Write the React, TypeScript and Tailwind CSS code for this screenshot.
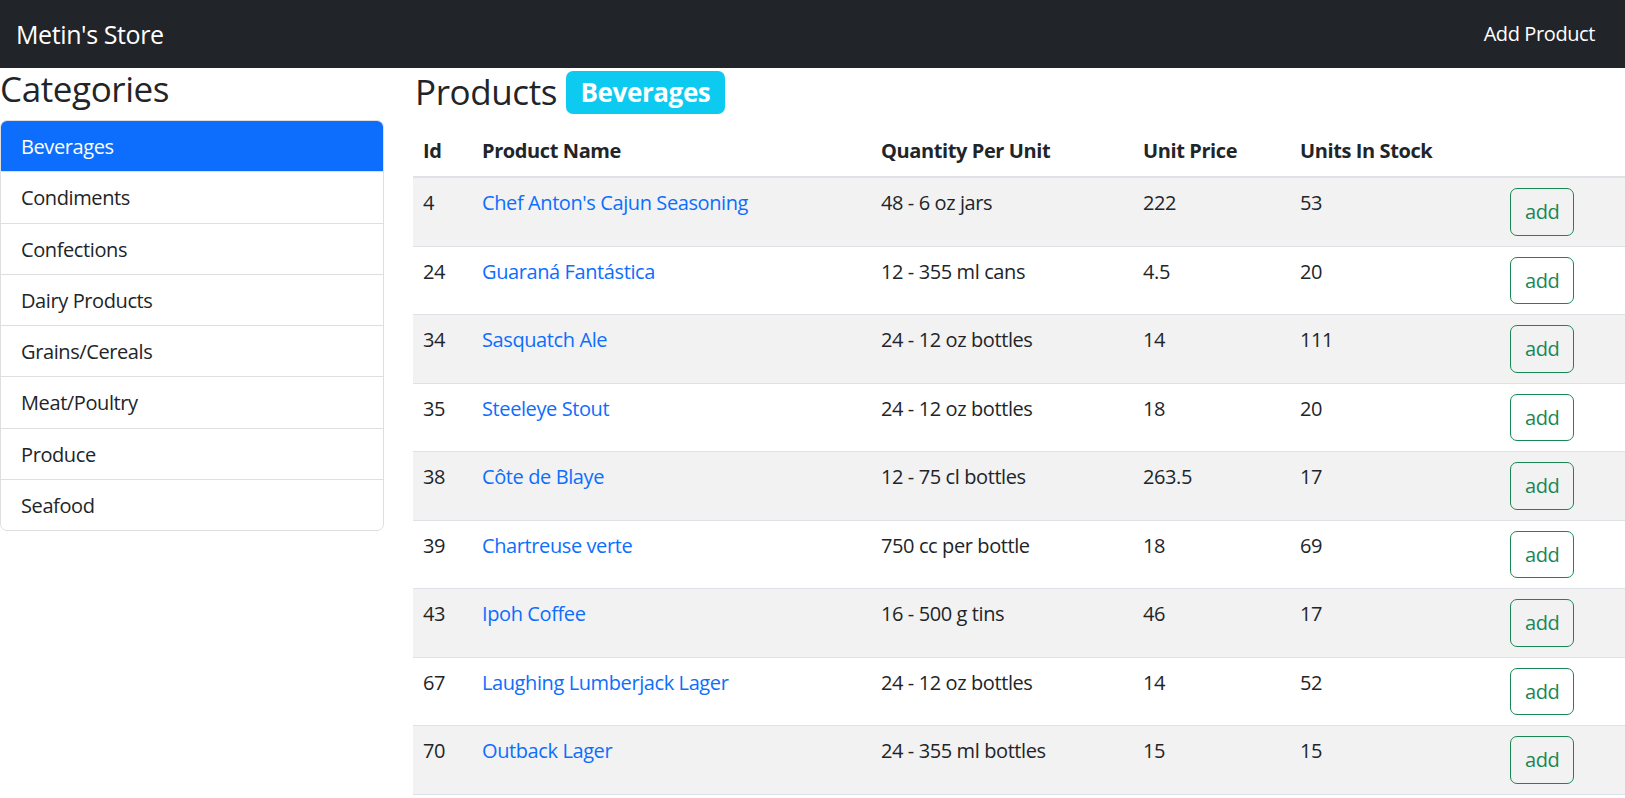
import React from "react";

type Product = {
  id: number;
  name: string;
  quantityPerUnit: string;
  unitPrice: number;
  unitsInStock: number;
};

const categories = [
  "Beverages",
  "Condiments",
  "Confections",
  "Dairy Products",
  "Grains/Cereals",
  "Meat/Poultry",
  "Produce",
  "Seafood",
];

const products: Product[] = [
  { id: 4, name: "Chef Anton's Cajun Seasoning", quantityPerUnit: "48 - 6 oz jars", unitPrice: 222, unitsInStock: 53 },
  { id: 24, name: "Guaraná Fantástica", quantityPerUnit: "12 - 355 ml cans", unitPrice: 4.5, unitsInStock: 20 },
  { id: 34, name: "Sasquatch Ale", quantityPerUnit: "24 - 12 oz bottles", unitPrice: 14, unitsInStock: 111 },
  { id: 35, name: "Steeleye Stout", quantityPerUnit: "24 - 12 oz bottles", unitPrice: 18, unitsInStock: 20 },
  { id: 38, name: "Côte de Blaye", quantityPerUnit: "12 - 75 cl bottles", unitPrice: 263.5, unitsInStock: 17 },
  { id: 39, name: "Chartreuse verte", quantityPerUnit: "750 cc per bottle", unitPrice: 18, unitsInStock: 69 },
  { id: 43, name: "Ipoh Coffee", quantityPerUnit: "16 - 500 g tins", unitPrice: 46, unitsInStock: 17 },
  { id: 67, name: "Laughing Lumberjack Lager", quantityPerUnit: "24 - 12 oz bottles", unitPrice: 14, unitsInStock: 52 },
  { id: 70, name: "Outback Lager", quantityPerUnit: "24 - 355 ml bottles", unitPrice: 15, unitsInStock: 15 },
];

const Navi: React.FC = () => (
  <nav className="h-[68px] bg-[#212529] text-white flex items-center justify-between pl-4 pr-[30px]">
    <span className="text-[25px] leading-[36px]">Metin's Store</span>
    <a className="text-[20px] leading-[30px] cursor-pointer">Add Product</a>
  </nav>
);

const CategoryList: React.FC<{ current: string }> = ({ current }) => (
  <div className="w-[384px] shrink-0">
    <h3 className="text-[35px] leading-[42px] font-medium mb-[10px]">Categories</h3>
    <ul className="border border-[#dfdfdf] rounded-[7px] overflow-hidden">
      {categories.map((c, i) => (
        <li
          key={c}
          className={`px-5 pt-[11px] pb-[9px] text-[20px] leading-[30.25px] cursor-pointer ${
            i > 0 ? "border-t border-[#dfdfdf]" : ""
          } ${c === current ? "bg-[#0d6efd] text-white" : ""}`}
        >
          {c}
        </li>
      ))}
    </ul>
  </div>
);

const ProductList: React.FC<{ current: string }> = ({ current }) => (
  <div className="flex-1 ml-[29px]">
    {/* başlık */}
    <h3 className="h-[48px] flex items-center text-[35px] font-medium mb-[10px] pl-[2px]">
      Products
      <span className="ml-[9px] bg-[#0dcaf0] text-white font-bold text-[26px] leading-none px-[14.5px] pt-[8px] pb-[9px] rounded-[7px]">
        {current}
      </span>
    </h3>

    <table className="w-full table-fixed text-left text-[20px] leading-[30px]">
      <thead>
        <tr className="border-b-2 border-[#dee2e6]">
          <th className="w-[59px] p-[10px] font-bold">Id</th>
          <th className="w-[399px] p-[10px] font-bold">Product Name</th>
          <th className="w-[262px] p-[10px] font-bold">Quantity Per Unit</th>
          <th className="w-[157px] p-[10px] font-bold">Unit Price</th>
          <th className="w-[210px] p-[10px] font-bold">Units In Stock</th>
          <th className="p-[10px]"></th>
        </tr>
      </thead>
      <tbody>
        {products.map((p, i) => (
          <tr
            key={p.id}
            className={`border-b border-[#dee2e6] align-top ${i % 2 === 0 ? "bg-[#f2f2f2]" : ""}`}
          >
            <td className="p-[10px]">{p.id}</td>
            <td className="p-[10px]">
              <a className="text-[#0d6efd] cursor-pointer">{p.name}</a>
            </td>
            <td className="p-[10px]">{p.quantityPerUnit}</td>
            <td className="p-[10px]">{p.unitPrice}</td>
            <td className="p-[10px]">{p.unitsInStock}</td>
            <td className="p-[10px]">
              <button className="border border-[#198754] text-[#198754] rounded-[7px] px-[14px] py-[7px] leading-[31.5px]">
                add
              </button>
            </td>
          </tr>
        ))}
      </tbody>
    </table>
  </div>
);

export default function App() {
  const current = "Beverages";
  return (
    <div className="min-h-screen bg-white text-[#212529] tracking-[-0.025em] font-['Open_Sans',sans-serif]">
      <Navi />
      <div className="flex">
        <CategoryList current={current} />
        <ProductList current={current} />
      </div>
    </div>
  );
}
